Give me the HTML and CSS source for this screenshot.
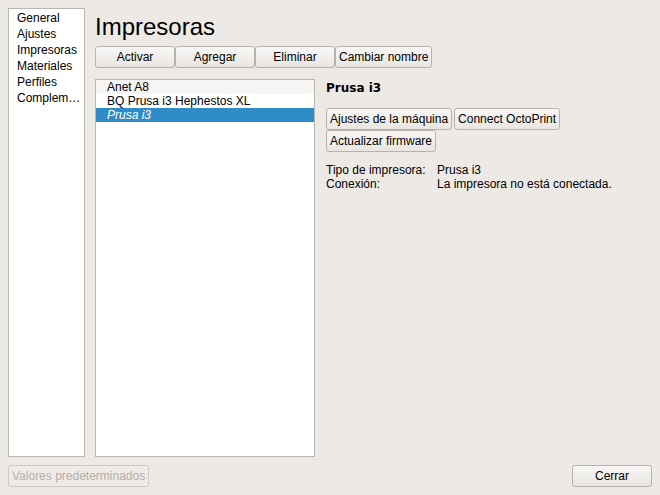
FILE: index.html
```html
<!DOCTYPE html>
<html lang="es">
<head>
<meta charset="utf-8">
<title>Impresoras</title>
<link rel="stylesheet" href="styles.css">
</head>
<body>
<div class="window">
  <div class="main">
    <ul class="nav">
      <li>General</li>
      <li>Ajustes</li>
      <li>Impresoras</li>
      <li>Materiales</li>
      <li>Perfiles</li>
      <li>Complem…</li>
    </ul>
    <div class="page">
      <h1 class="title">Impresoras</h1>
      <div class="toolbar">
        <button class="btn tb">Activar</button>
        <button class="btn tb">Agregar</button>
        <button class="btn tb">Eliminar</button>
        <button class="btn">Cambiar nombre</button>
      </div>
      <div class="content">
        <ul class="printers">
          <li class="alt">Anet A8</li>
          <li>BQ Prusa i3 Hephestos XL</li>
          <li class="sel">Prusa i3</li>
        </ul>
        <div class="details">
          <div class="name">Prusa i3</div>
          <div class="actions">
            <button class="btn">Ajustes de la máquina</button>
            <button class="btn">Connect OctoPrint</button>
            <button class="btn">Actualizar firmware</button>
          </div>
          <div class="info">
            <span>Tipo de impresora:</span><span>Prusa i3</span>
            <span>Conexión:</span><span>La impresora no está conectada.</span>
          </div>
        </div>
      </div>
    </div>
  </div>
  <div class="footer">
    <button class="btn disabled">Valores predeterminados</button>
    <button class="btn close">Cerrar</button>
  </div>
</div>
</body>
</html>
```
FILE: styles.css
```css
html, body {
  margin: 0;
  padding: 0;
  background: #edeae6;
}
body {
  font-family: "Liberation Sans", Arial, sans-serif;
  font-size: 12px;
  color: #000;
}
.window {
  width: 660px;
  height: 495px;
  box-sizing: border-box;
  padding: 8px 8px 8px 8px;
  display: flex;
  flex-direction: column;
}
.main {
  display: flex;
  gap: 10px;
  height: 449px;
}
.nav {
  list-style: none;
  margin: 0;
  padding: 1px 0 0 8px;
  width: 77px;
  box-sizing: border-box;
  height: 449px;
  background: #fff;
  border: 1px solid #b9b5b0;
}
.nav li {
  height: 16px;
  line-height: 16px;
  white-space: nowrap;
}
.page {
  flex: 1;
  display: flex;
  flex-direction: column;
}
.title {
  margin: 0;
  font-weight: normal;
  font-size: 24px;
  line-height: 38px;
  height: 38px;
}
.toolbar {
  display: flex;
}
.btn {
  font-family: "Liberation Sans", Arial, sans-serif;
  font-size: 12px;
  color: #000;
  height: 22px;
  padding: 0 3px;
  margin: 0;
  border: 1px solid #b6b2ad;
  border-radius: 3px;
  background: linear-gradient(#f8f7f6, #e9e6e2);
  line-height: 20px;
  white-space: nowrap;
}
.tb {
  width: 80px;
}
.content {
  display: flex;
  gap: 11px;
  margin-top: 11px;
  flex: 1;
}
.printers {
  list-style: none;
  margin: 0;
  padding: 0;
  width: 220px;
  box-sizing: border-box;
  background: #fff;
  border: 1px solid #b9b5b0;
}
.printers li {
  height: 14px;
  line-height: 14px;
  padding-left: 11px;
  white-space: nowrap;
}
.printers li.alt {
  background: #f6f5f4;
}
.printers li.sel {
  background: #308cc6;
  color: #fff;
  font-style: italic;
}
.details {
  flex: 1;
  padding-top: 1px;
}
.name {
  font-family: "DejaVu Sans", sans-serif;
  font-weight: bold;
  font-size: 12px;
  height: 16px;
  line-height: 16px;
}
.actions {
  display: flex;
  flex-wrap: wrap;
  column-gap: 2px;
  width: 240px;
  margin-top: 12px;
}
.info {
  margin-top: 11px;
  display: grid;
  grid-template-columns: 111px auto;
  line-height: 14px;
}
.footer {
  display: flex;
  justify-content: space-between;
  margin-top: 8px;
}
.btn.disabled {
  color: #b3afaa;
  border-color: #cdc9c4;
  background: #eeebe7;
}
.btn.close {
  width: 80px;
}
```
